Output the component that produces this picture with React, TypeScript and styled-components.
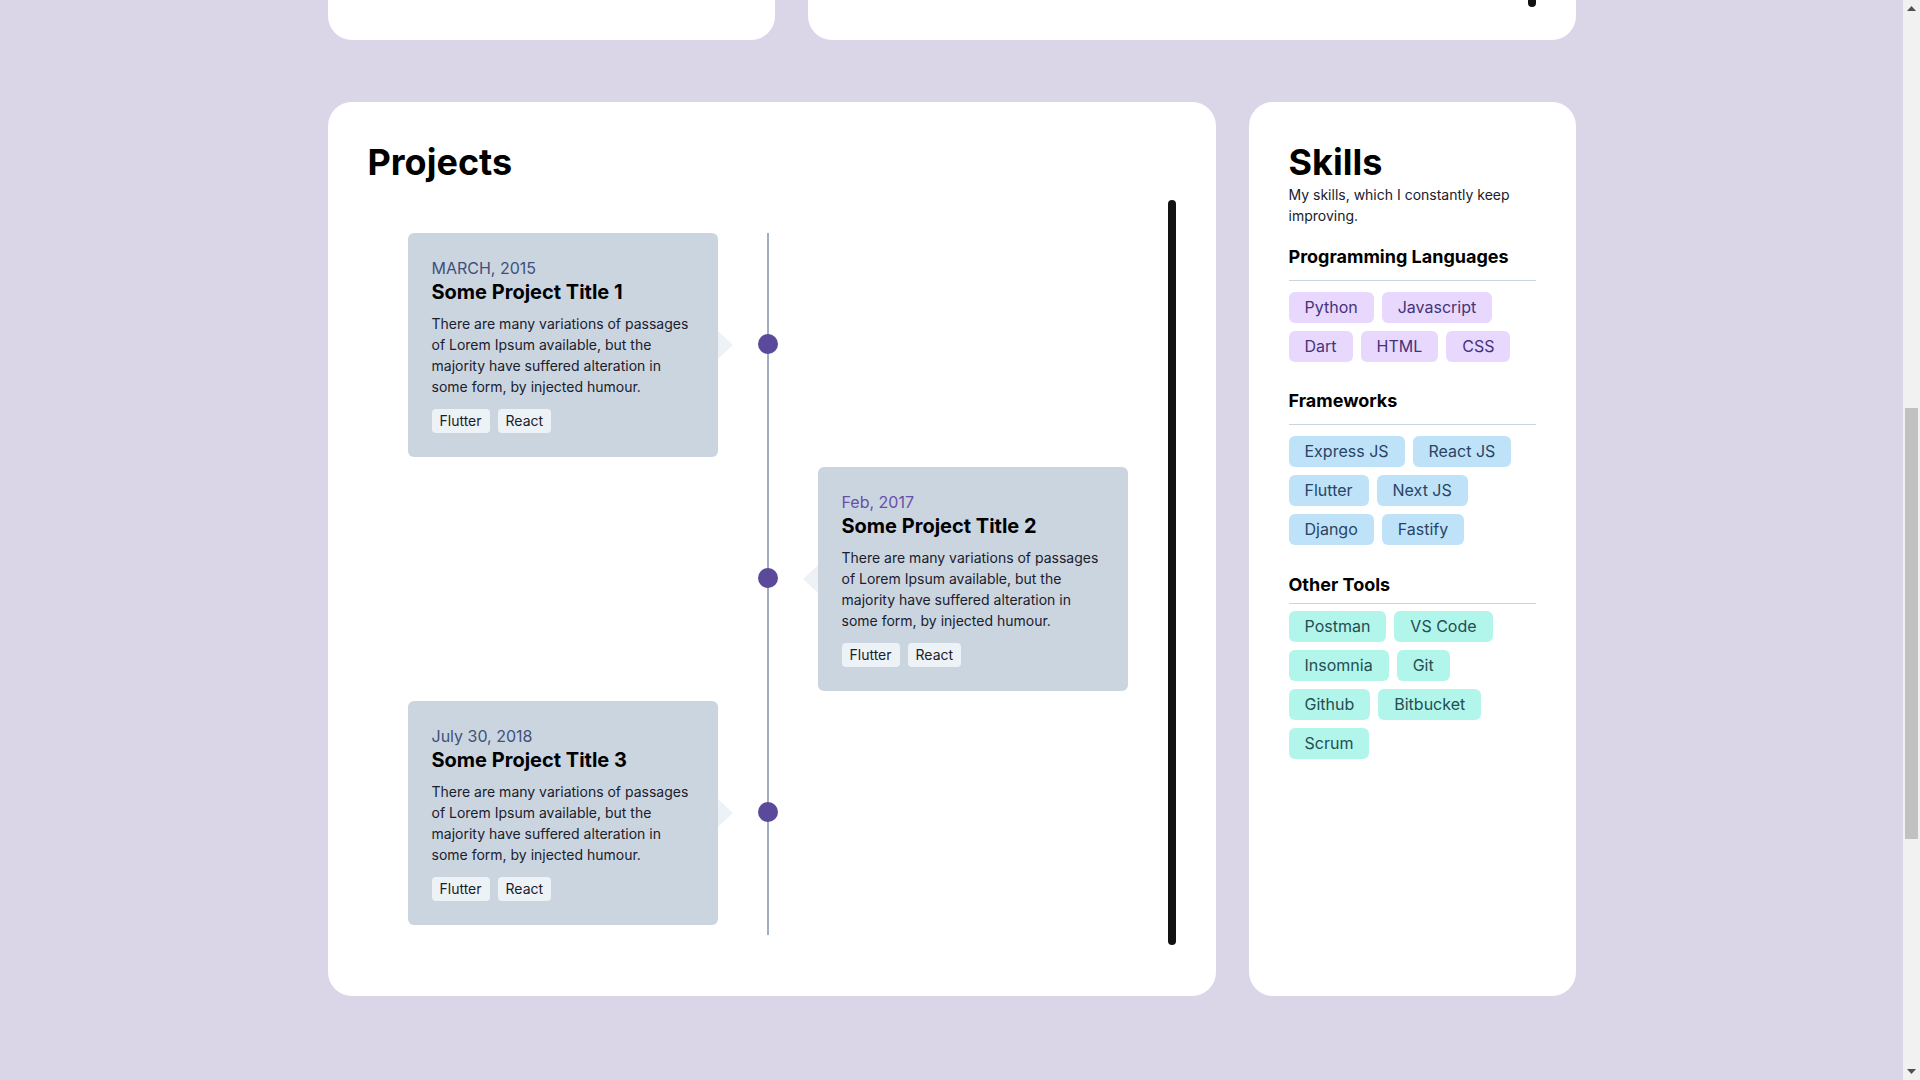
import { useLayoutEffect, useRef, useState } from 'react'
import styled, { createGlobalStyle } from 'styled-components'

const GlobalStyle = createGlobalStyle`
  html, body {
    margin: 0;
    padding: 0;
    height: 100%;
    overflow: hidden;
  }
  body {
    background: #dad6e8;
    font-family: Inter, "Noto Sans", "Liberation Sans", sans-serif;
    color: #1a202c;
  }
  * {
    box-sizing: border-box;
  }
`

const Shell = styled.div`
  display: flex;
  height: 100vh;
`

// the page itself, scrolled part way down
const Pane = styled.div`
  flex: 1;
  height: 100vh;
  overflow: hidden;
`

const ScrollTrack = styled.div`
  width: 17px;
  flex-shrink: 0;
  height: 100vh;
  background: #f1f1f1;
  position: relative;
`

const ArrowButton = styled.div<{ $down?: boolean }>`
  position: absolute;
  left: 0;
  ${(props) => (props.$down ? 'bottom: 0;' : 'top: 0;')}
  width: 17px;
  height: 17px;
  display: flex;
  align-items: center;
  justify-content: center;
`

const Thumb = styled.div`
  position: absolute;
  left: 2px;
  right: 2px;
  background: #c1c1c1;
`

const Page = styled.div`
  width: 1248px;
  margin: 0 auto;
  padding: 62px 0 645px;
`

const Row = styled.div<{ $columns: string; $top?: number }>`
  display: grid;
  grid-template-columns: ${(props) => props.$columns};
  gap: 33px;
  margin-top: ${(props) => props.$top ?? 0}px;
`

const Card = styled.section<{ $height?: number; $pad?: string }>`
  background: #fff;
  border-radius: 24px;
  padding: ${(props) => props.$pad ?? '39px 40px 51px'};
  display: flex;
  flex-direction: column;
  ${(props) => (props.$height ? `height: ${props.$height}px;` : '')}
`

const Title = styled.h2`
  margin: 0;
  font-size: 36px;
  line-height: 43px;
  font-weight: 700;
  color: #000;
`

const Lead = styled.p`
  margin: 0;
  font-size: 14px;
  line-height: 21px;
  color: #1a202c;
`

// a content strip with the thin black scroll thumb on its right
const Frame = styled.div<{ $height?: number; $top?: number }>`
  display: flex;
  margin-top: ${(props) => props.$top ?? 16}px;
  ${(props) => (props.$height ? `height: ${props.$height}px;` : 'flex: 1;')}
`

const FrameBody = styled.div<{ $pad?: string }>`
  flex: 1;
  padding: ${(props) => props.$pad ?? '33px 40px 0'};
`

const Bar = styled.div`
  width: 8px;
  flex-shrink: 0;
  border-radius: 4px;
  background: #121212;
`

const Timeline = styled.div`
  position: relative;

  &::before {
    content: '';
    position: absolute;
    top: 0;
    bottom: 0;
    left: 50%;
    width: 2px;
    margin-left: -1px;
    background: #a0aec0;
  }
`

const Item = styled.div<{ $side: 'left' | 'right' }>`
  position: relative;
  width: 50%;
  padding-bottom: 10px;
  ${(props) => (props.$side === 'left' ? 'padding-right: 50px;' : 'margin-left: 50%; padding-left: 50px;')}

  &::after {
    content: '';
    position: absolute;
    top: 101px;
    ${(props) => (props.$side === 'left' ? 'right: -10px;' : 'left: -10px;')}
    width: 20px;
    height: 20px;
    border-radius: 50%;
    background: #5b4a9b;
    z-index: 1;
  }
`

const ProjectCard = styled.article<{ $side: 'left' | 'right' }>`
  position: relative;
  background: #cbd5e0;
  border-radius: 6px;
  padding: 25px 24px 24px;

  &::after {
    content: '';
    position: absolute;
    top: 50%;
    transform: translateY(-50%);
    border-top: 14px solid transparent;
    border-bottom: 14px solid transparent;
    ${(props) =>
      props.$side === 'left'
        ? 'left: 100%; border-left: 15px solid #edf2f7;'
        : 'right: 100%; border-right: 15px solid #edf2f7;'}
  }
`

const ProjectDate = styled.div<{ $color: string }>`
  font-size: 16px;
  line-height: 20px;
  color: ${(props) => props.$color};
`

const ProjectTitle = styled.h3`
  margin: 0 0 7px;
  font-size: 20px;
  line-height: 28px;
  font-weight: 700;
  color: #000;
`

const ProjectText = styled.p`
  margin: 0;
  font-size: 14px;
  line-height: 21px;
  color: #1a202c;
`

const StackList = styled.div`
  display: flex;
  gap: 8px;
  margin-top: 12px;
`

const StackTag = styled.span`
  display: inline-block;
  background: #edf2f7;
  border-radius: 4px;
  padding: 2px 8px;
  font-size: 14px;
  line-height: 20px;
  color: #1a202c;
`

const Group = styled.div<{ $top: number }>`
  margin-top: ${(props) => props.$top}px;
`

const GroupTitle = styled.h4<{ $gap: number }>`
  margin: 0;
  font-size: 18px;
  line-height: 28px;
  font-weight: 700;
  color: #000;
  padding-bottom: ${(props) => props.$gap}px;
  border-bottom: 1px solid #cbd5e0;
`

const Chips = styled.div<{ $top: number }>`
  display: flex;
  flex-wrap: wrap;
  gap: 8px;
  margin-top: ${(props) => props.$top}px;
`

const Chip = styled.span<{ $bg: string; $fg: string }>`
  display: inline-block;
  padding: 4px 16px;
  font-size: 16px;
  line-height: 23px;
  border-radius: 6px;
  background: ${(props) => props.$bg};
  color: ${(props) => props.$fg};
`

const projects = [
  { date: 'MARCH, 2015', color: '#41507a', title: 'Some Project Title 1', side: 'left' as const },
  { date: 'Feb, 2017', color: '#6650a8', title: 'Some Project Title 2', side: 'right' as const },
  { date: 'July 30, 2018', color: '#41507a', title: 'Some Project Title 3', side: 'left' as const },
]

const lorem =
  'There are many variations of passages of Lorem Ipsum available, but the majority have suffered alteration in some form, by injected humour.'

const skillGroups = [
  {
    name: 'Programming Languages',
    top: 17,
    gap: 9,
    chipsTop: 11,
    bg: '#e9d8fd',
    fg: '#44337a',
    items: ['Python', 'Javascript', 'Dart', 'HTML', 'CSS'],
  },
  {
    name: 'Frameworks',
    top: 25,
    gap: 9,
    chipsTop: 11,
    bg: '#bee3f8',
    fg: '#2a4365',
    items: ['Express JS', 'React JS', 'Flutter', 'Next JS', 'Django', 'Fastify'],
  },
  {
    name: 'Other Tools',
    top: 26,
    gap: 4,
    chipsTop: 7,
    bg: '#b2f5ea',
    fg: '#234e52',
    items: ['Postman', 'VS Code', 'Insomnia', 'Git', 'Github', 'Bitbucket', 'Scrum'],
  },
]

const SCROLL_TOP = 980
const ARROW = 17

export default function App() {
  const paneRef = useRef<HTMLDivElement>(null)
  const [thumb, setThumb] = useState({ top: 408, height: 431 })

  useLayoutEffect(() => {
    const pane = paneRef.current
    if (!pane) return
    pane.scrollTop = SCROLL_TOP
    const track = pane.clientHeight - ARROW * 2
    const height = Math.round((track * pane.clientHeight) / pane.scrollHeight)
    const range = pane.scrollHeight - pane.clientHeight
    const top = ARROW + Math.round(((track - height) * pane.scrollTop) / (range || 1))
    setThumb({ top, height })
  }, [])

  return (
    <>
      <GlobalStyle />
      <Shell>
        <Pane ref={paneRef}>
          <Page>
            <Row $columns="447px 768px">
              <Card $height={958} $pad="39px 40px 33px" />
              <Card $height={958} $pad="120px 40px 33px">
                <Frame $top={0}>
                  <FrameBody />
                  <Bar />
                </Frame>
              </Card>
            </Row>

            <Row $columns="888px 327px" $top={62}>
              <Card>
                <Title>Projects</Title>
                <Frame $height={745}>
                  <FrameBody>
                    <Timeline>
                      {projects.map((p) => (
                        <Item key={p.title} $side={p.side}>
                          <ProjectCard $side={p.side}>
                            <ProjectDate $color={p.color}>{p.date}</ProjectDate>
                            <ProjectTitle>{p.title}</ProjectTitle>
                            <ProjectText>{lorem}</ProjectText>
                            <StackList>
                              <StackTag>Flutter</StackTag>
                              <StackTag>React</StackTag>
                            </StackList>
                          </ProjectCard>
                        </Item>
                      ))}
                    </Timeline>
                  </FrameBody>
                  <Bar />
                </Frame>
              </Card>

              <Card>
                <Title>Skills</Title>
                <Lead>My skills, which I constantly keep improving.</Lead>
                {skillGroups.map((g) => (
                  <Group key={g.name} $top={g.top}>
                    <GroupTitle $gap={g.gap}>{g.name}</GroupTitle>
                    <Chips $top={g.chipsTop}>
                      {g.items.map((s) => (
                        <Chip key={s} $bg={g.bg} $fg={g.fg}>
                          {s}
                        </Chip>
                      ))}
                    </Chips>
                  </Group>
                ))}
              </Card>
            </Row>
          </Page>
        </Pane>

        <ScrollTrack>
          <ArrowButton>
            <svg width="9" height="5" viewBox="0 0 9 5">
              <polygon points="4.5,0 9,5 0,5" fill="#505050" />
            </svg>
          </ArrowButton>
          <Thumb style={{ top: thumb.top, height: thumb.height }} />
          <ArrowButton $down>
            <svg width="9" height="5" viewBox="0 0 9 5">
              <polygon points="0,0 9,0 4.5,5" fill="#505050" />
            </svg>
          </ArrowButton>
        </ScrollTrack>
      </Shell>
    </>
  )
}
